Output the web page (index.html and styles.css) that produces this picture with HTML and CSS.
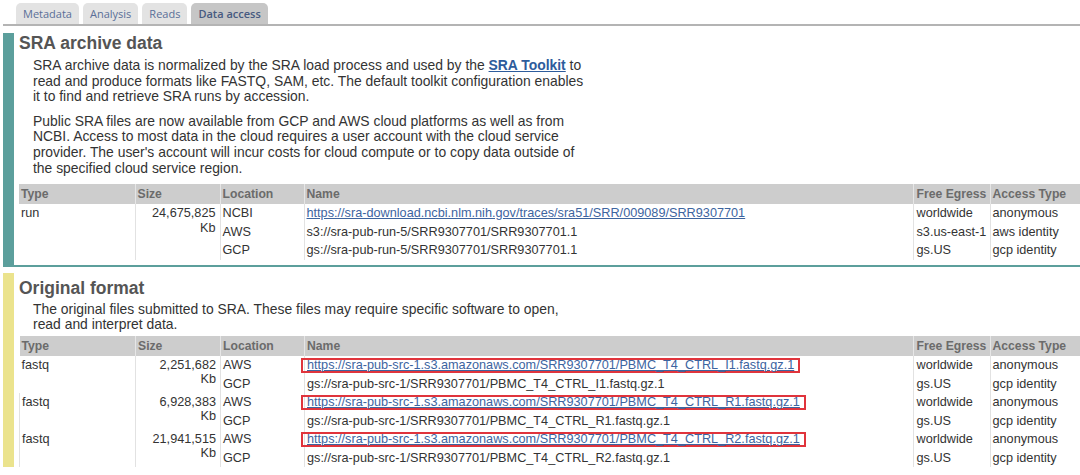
FILE: index.html
```html
<!DOCTYPE html>
<html>
<head>
<meta charset="utf-8">
<link rel="stylesheet" href="styles.css">
</head>
<body>
<nav class="tabs">
  <span class="tab">Metadata</span>
  <span class="tab">Analysis</span>
  <span class="tab">Reads</span>
  <span class="tab active">Data access</span>
</nav>

<section class="sec sec-sra">
  <h2 class="sec-title">SRA archive data</h2>
  <p class="para">SRA archive data is normalized by the SRA load process and used by the <a class="toolkit" href="#">SRA Toolkit</a> to read and produce formats like FASTQ, SAM, etc. The default toolkit configuration enables it to find and retrieve SRA runs by accession.</p>
  <p class="para para-2">Public SRA files are now available from GCP and AWS cloud platforms as well as from NCBI. Access to most data in the cloud requires a user account with the cloud service provider. The user's account will incur costs for cloud compute or to copy data outside of the specified cloud service region.</p>
  <table class="files">
    <colgroup>
      <col class="c-type"><col class="c-size"><col class="c-loc"><col><col class="c-egress"><col class="c-access">
    </colgroup>
    <thead>
      <tr><th>Type</th><th>Size</th><th>Location</th><th>Name</th><th>Free Egress</th><th>Access Type</th></tr>
    </thead>
    <tbody>
      <tr><td rowspan="3">run</td><td rowspan="3" class="size">24,675,825<span class="unit">Kb</span></td><td>NCBI</td><td><a href="#">https://sra-download.ncbi.nlm.nih.gov/traces/sra51/SRR/009089/SRR9307701</a></td><td>worldwide</td><td>anonymous</td></tr>
      <tr><td>AWS</td><td>s3://sra-pub-run-5/SRR9307701/SRR9307701.1</td><td>s3.us-east-1</td><td>aws identity</td></tr>
      <tr><td>GCP</td><td>gs://sra-pub-run-5/SRR9307701/SRR9307701.1</td><td>gs.US</td><td>gcp identity</td></tr>
    </tbody>
  </table>
</section>

<section class="sec sec-orig">
  <h2 class="sec-title">Original format</h2>
  <p class="para para-narrow">The original files submitted to SRA. These files may require specific software to open, read and interpret data.</p>
  <table class="files files-orig">
    <colgroup>
      <col class="c-type"><col class="c-size"><col class="c-loc"><col><col class="c-egress"><col class="c-access">
    </colgroup>
    <thead>
      <tr><th>Type</th><th>Size</th><th>Location</th><th>Name</th><th>Free Egress</th><th>Access Type</th></tr>
    </thead>
    <tbody>
      <tr><td rowspan="2">fastq</td><td rowspan="2" class="size">2,251,682<span class="unit">Kb</span></td><td>AWS</td><td><a class="hl" href="#">https://sra-pub-src-1.s3.amazonaws.com/SRR9307701/PBMC_T4_CTRL_I1.fastq.gz.1</a></td><td>worldwide</td><td>anonymous</td></tr>
      <tr><td>GCP</td><td>gs://sra-pub-src-1/SRR9307701/PBMC_T4_CTRL_I1.fastq.gz.1</td><td>gs.US</td><td>gcp identity</td></tr>
      <tr><td rowspan="2">fastq</td><td rowspan="2" class="size">6,928,383<span class="unit">Kb</span></td><td>AWS</td><td><a class="hl" href="#">https://sra-pub-src-1.s3.amazonaws.com/SRR9307701/PBMC_T4_CTRL_R1.fastq.gz.1</a></td><td>worldwide</td><td>anonymous</td></tr>
      <tr><td>GCP</td><td>gs://sra-pub-src-1/SRR9307701/PBMC_T4_CTRL_R1.fastq.gz.1</td><td>gs.US</td><td>gcp identity</td></tr>
      <tr><td rowspan="2">fastq</td><td rowspan="2" class="size">21,941,515<span class="unit">Kb</span></td><td>AWS</td><td><a class="hl" href="#">https://sra-pub-src-1.s3.amazonaws.com/SRR9307701/PBMC_T4_CTRL_R2.fastq.gz.1</a></td><td>worldwide</td><td>anonymous</td></tr>
      <tr><td>GCP</td><td>gs://sra-pub-src-1/SRR9307701/PBMC_T4_CTRL_R2.fastq.gz.1</td><td>gs.US</td><td>gcp identity</td></tr>
    </tbody>
  </table>
</section>
</body>
</html>
```

FILE: styles.css
```css
html, body {
  margin: 0;
  padding: 0;
  background: #ffffff;
}

body {
  font-family: "Liberation Sans", Arial, sans-serif;
  color: #333333;
  overflow: hidden;
}

.tabs {
  display: flex;
  gap: 4px;
  padding: 3px 0 0 16px;
  margin-left: 3px;
  border-bottom: 2px solid #b4b4b4;
  height: 21px;
  align-items: flex-end;
}

.tab {
  font-family: "Open Sans", "Noto Sans", sans-serif;
  font-size: 11px;
  line-height: 21px;
  height: 21px;
  padding: 0 7px;
  background: #e3e3e3;
  color: #5a6f98;
  border-radius: 5px 5px 0 0;
}

.tab.active {
  background: #c6c6c6;
  color: #475a80;
  font-weight: 600;
}

.tabs .tab:first-child {
  margin-left: -3px;
}

.sec {
  margin-left: 3px;
  border-left: 11px solid #5c9f9c;
  padding-left: 5px;
}

.sec-sra {
  margin-top: 7px;
  border-bottom: 2px solid #5c9f9c;
  padding-bottom: 5px;
}

.sec-orig {
  margin-top: 6px;
  border-left-color: #ebe38d;
  padding-top: 5px;
}

.sec-title {
  margin: 0;
  font-size: 17.5px;
  line-height: 20px;
  font-weight: bold;
  color: #555555;
}

.para {
  margin: 5px 0 0 14px;
  width: 557px;
  font-size: 13.9px;
  line-height: 15.6px;
  color: #333333;
}

.para-2 {
  margin-top: 9px;
}

.para-narrow {
  width: 540px;
  margin-top: 4px;
}

.toolkit {
  color: #2d5c9c;
  font-weight: bold;
  text-decoration: underline;
}

.files {
  width: 100%;
  margin-top: 8px;
  border-collapse: collapse;
  table-layout: fixed;
  font-size: 12.7px;
}

.files-orig {
  margin-top: 3px;
}

.c-type { width: 116px; }
.c-size { width: 85px; }
.c-loc { width: 84px; }
.c-egress { width: 77px; }
.c-access { width: 90px; }

.files th {
  background: #cdcdcd;
  color: #6b6b6b;
  font-weight: bold;
  font-size: 12.2px;
  text-align: left;
  height: 20px;
  line-height: 20px;
  padding: 0 2px;
  white-space: nowrap;
  overflow: hidden;
  border-left: 1px solid #e6e6e6;
}

.files td {
  line-height: 14.5px;
  padding: 2px 2px;
  vertical-align: top;
  white-space: nowrap;
  border-left: 1px solid #e2e2e2;
  color: #333333;
}

.files-orig td {
  line-height: 14px;
}

.files th:first-child,
.files tr:first-child td:first-child {
  border-left: none;
}

.files td.size {
  text-align: right;
  padding-right: 4px;
}

.files th:nth-child(5),
.files td:nth-last-child(2) {
  padding-left: 3px;
}

.unit {
  display: block;
}

.files a {
  color: #3d649f;
  text-decoration: underline;
}

.files a.hl {
  display: inline-block;
  border: 2px solid #e0343c;
  padding: 0 4px;
  margin: 0 0 0 -6px;
  line-height: 11px;
}
```
